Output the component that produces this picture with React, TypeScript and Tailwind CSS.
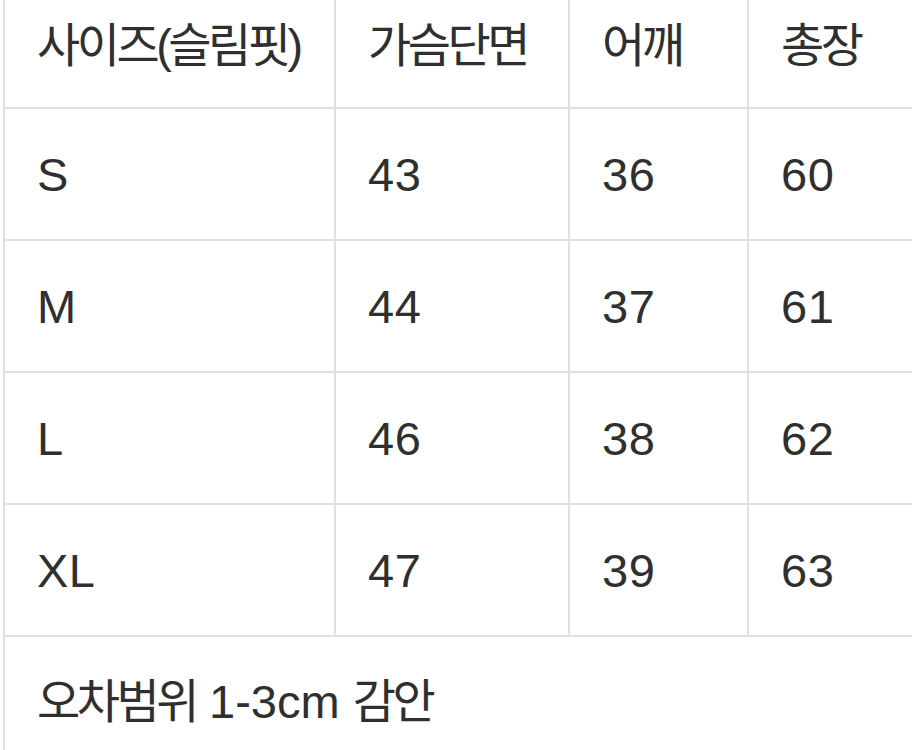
const rows = [
  ["S", "43", "36", "60"],
  ["M", "44", "37", "61"],
  ["L", "46", "38", "62"],
  ["XL", "47", "39", "63"],
];

const cell = "border-2 border-[#e0e0e0] pl-[32px] align-middle";

export default function App() {
  return (
    <div
      className="h-[750px] w-[912px] overflow-hidden bg-white pl-[3px] text-[#2f2f2f]"
      style={{ fontFamily: '"Liberation Sans", "Noto Sans CJK KR", sans-serif' }}
    >
      <table className="w-[909px] table-fixed border-collapse text-[47px] leading-none">
        <colgroup>
          <col className="w-[331px]" />
          <col className="w-[234px]" />
          <col className="w-[179px]" />
          <col className="w-[165px]" />
        </colgroup>
        <tbody>
          <tr className="h-[108px]">
            {["사이즈(슬림핏)", "가슴단면", "어깨", "총장"].map((h) => (
              <td key={h} className={`${cell} border-t-0 pb-[16px] whitespace-nowrap tracking-[-3.5px]`}>
                {h}
              </td>
            ))}
          </tr>
          {rows.map((r) => (
            <tr key={r[0]} className="h-[132px]">
              {r.map((v, i) => (
                <td key={i} className={`${cell} tracking-[0.5px]`}>
                  {v}
                </td>
              ))}
            </tr>
          ))}
          <tr className="h-[132px]">
            <td colSpan={4} className={`${cell} pb-[2px] whitespace-nowrap`}>
              <span className="tracking-[-3.5px]">오차범위</span> 1-3cm{" "}
              <span className="tracking-[-3.5px]">감안</span>
            </td>
          </tr>
        </tbody>
      </table>
    </div>
  );
}
